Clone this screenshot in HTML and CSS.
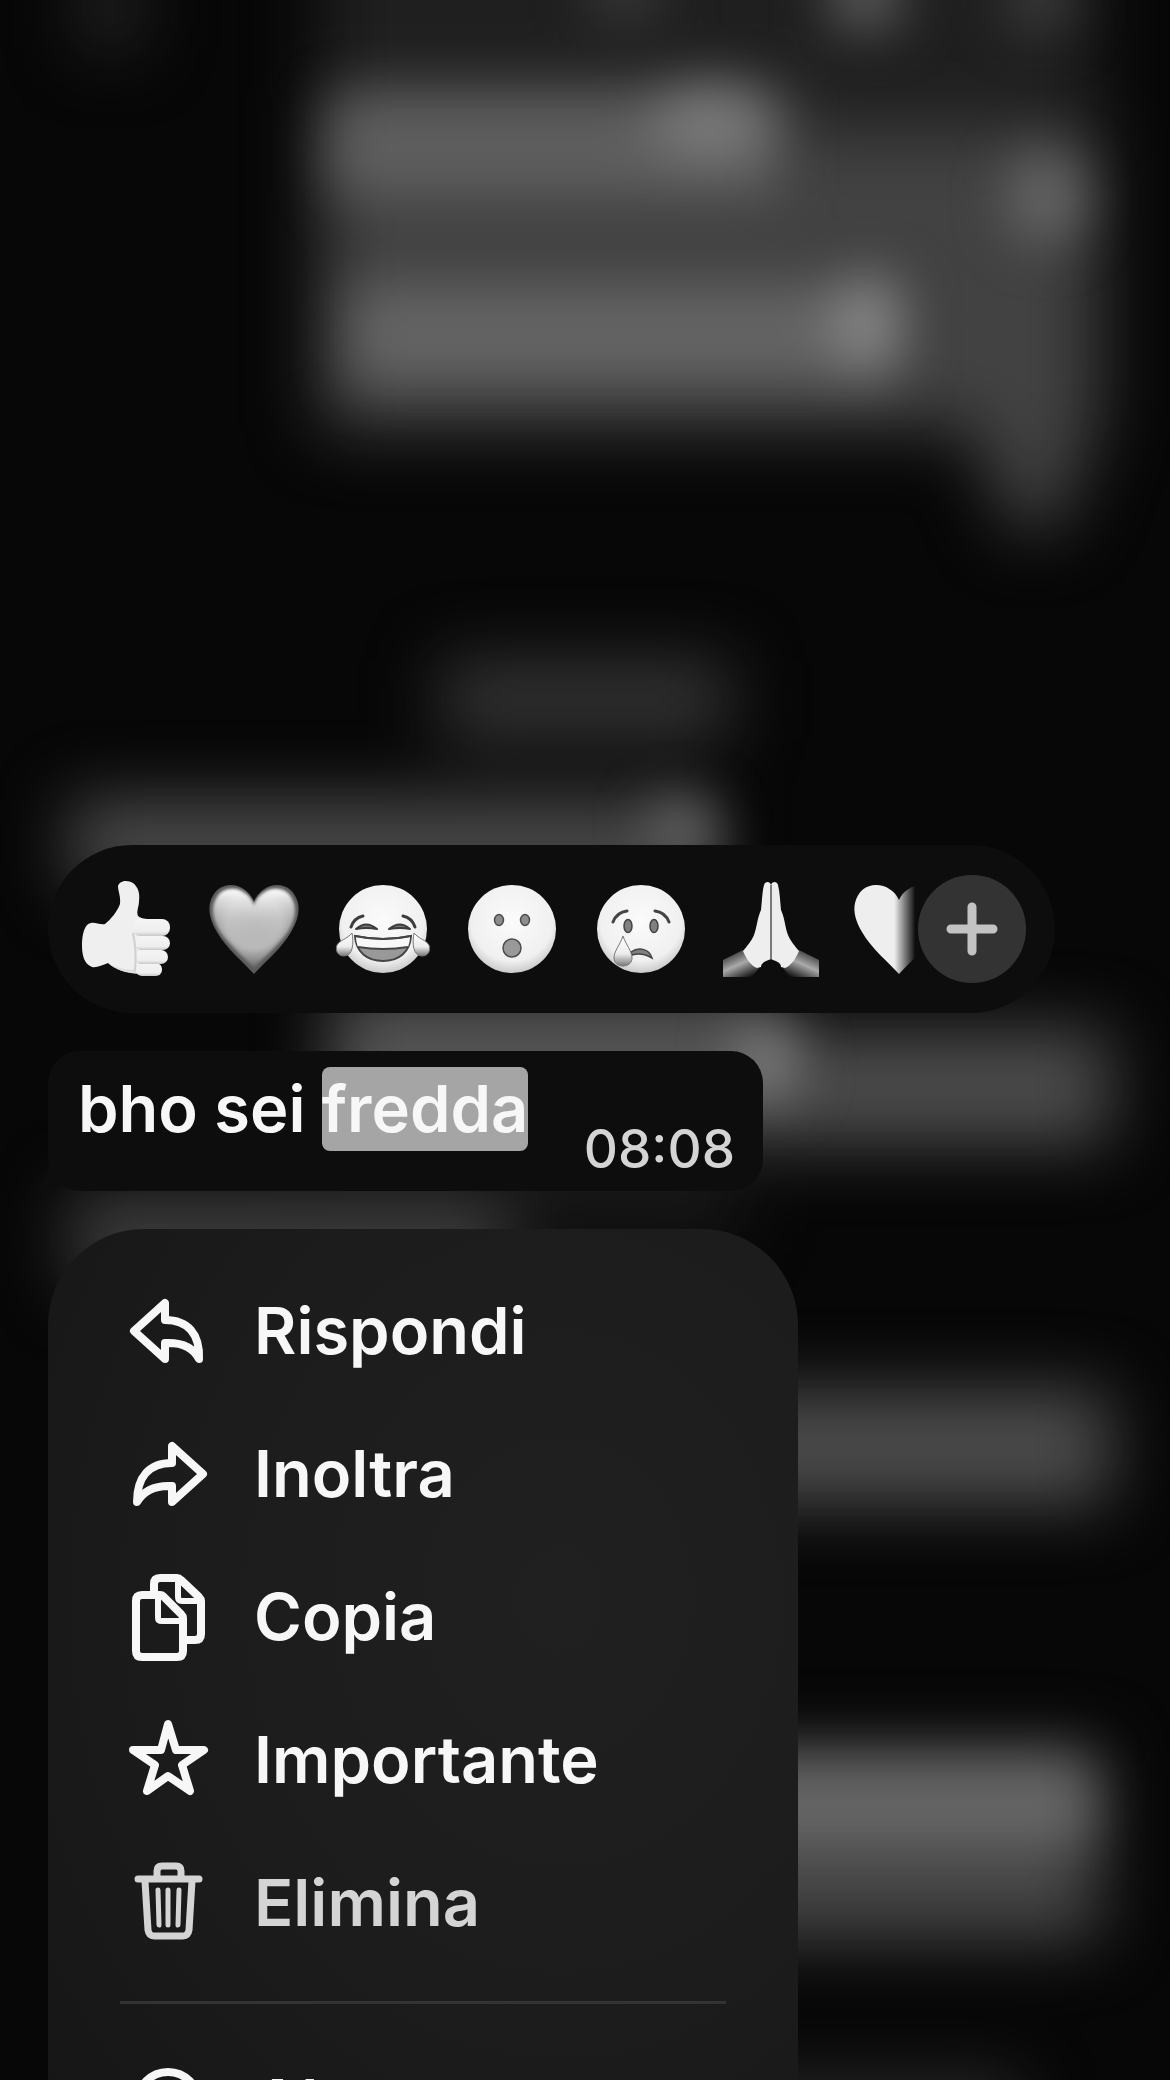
FILE: index.html
```html
<!DOCTYPE html>
<html lang="it">
<head>
  <meta charset="UTF-8"/>
  <meta name="viewport" content="width=device-width, initial-scale=1.0"/>
  <title>Chat</title>
  <link rel="stylesheet" href="styles.css">
</head>
<body>

  <!-- Blurred chat behind the menu -->
  <svg class="backdrop" viewBox="0 0 1170 2080" preserveAspectRatio="xMidYMin slice" aria-hidden="true">
    <defs>
      <filter id="blur" x="-50%" y="-100%" width="200%" height="300%" color-interpolation-filters="sRGB"><feGaussianBlur stdDeviation="34"/></filter>
      <filter id="soft" x="-100%" y="-150%" width="300%" height="400%" color-interpolation-filters="sRGB"><feGaussianBlur stdDeviation="26"/></filter>
    </defs>
    <g filter="url(#blur)">
      <rect x="320" y="-80" width="780" height="500" fill="#1f1f1f"/>
      <path d="M320 90H790V130H1100V420L1060 530H1010L970 430H320Z" fill="#424242"/>
      <rect x="80" y="-40" width="60" height="90" fill="#242424"/>
      <rect x="440" y="660" width="290" height="80" fill="#343434"/>
      <rect x="70" y="800" width="640" height="90" fill="#4c4c4c"/>
      <rect x="330" y="990" width="450" height="140" fill="#545454"/>
      <rect x="740" y="1030" width="370" height="115" fill="#4c4c4c"/>
      <rect x="70" y="1190" width="440" height="100" fill="#3c3c3c"/>
      <rect x="500" y="1170" width="240" height="60" fill="#1c1c1c"/>
      <rect x="600" y="1390" width="510" height="115" fill="#4c4c4c"/>
      <rect x="600" y="1750" width="500" height="190" fill="#474747"/>
      <rect x="600" y="2080" width="420" height="60" fill="#2e2e2e"/>
    </g>
    <g filter="url(#soft)">
      <rect x="330" y="96" width="450" height="100" fill="#686868" opacity=".75"/>
      <ellipse cx="710" cy="122" rx="62" ry="38" fill="#7a7a7a"/>
      <ellipse cx="1045" cy="198" rx="38" ry="46" fill="#666"/>
      <rect x="350" y="285" width="550" height="98" fill="#6a6a6a" opacity=".85"/>
      <ellipse cx="868" cy="322" rx="36" ry="48" fill="#868686"/>
      <rect x="830" y="-40" width="70" height="70" fill="#5a5a5a"/>
      <rect x="590" y="-40" width="70" height="60" fill="#383838"/>
      <rect x="1010" y="-40" width="60" height="70" fill="#3c3c3c"/>
      <ellipse cx="682" cy="832" rx="34" ry="34" fill="#646464"/>
      <ellipse cx="765" cy="1062" rx="34" ry="40" fill="#7c7c7c"/>
      <rect x="600" y="1762" width="490" height="84" fill="#6c6c6c" opacity=".85"/>
    </g>
  </svg>

  <main class="overlay">

    <!-- Reactions -->
    <div class="reactions">
      <button class="reaction" aria-label="Mi piace">
        <svg viewBox="0 0 96 96">
          <defs>
            <radialGradient id="face" cx=".5" cy=".4" r=".62">
              <stop offset="0" stop-color="#fbfbfb"/><stop offset=".75" stop-color="#f0f0f0"/><stop offset="1" stop-color="#c4c4c4"/>
            </radialGradient>
            <linearGradient id="finger" x1="0" y1="0" x2="0" y2="1">
              <stop offset="0" stop-color="#f4f4f4"/><stop offset=".75" stop-color="#eee"/><stop offset="1" stop-color="#c8c8c8"/>
            </linearGradient>
            <linearGradient id="tear" x1="0" y1="0" x2="0" y2="1">
              <stop offset="0" stop-color="#fff"/><stop offset=".6" stop-color="#ececec"/><stop offset="1" stop-color="#777"/>
            </linearGradient>
          </defs>
          <path fill="#efefef" d="M13 42C17 41 22 44 27 43C33 38 39 31 42 23C43 16 40 10 40 5C42 -1 50 -1 55 2C60 6 62 12 61 20C61 26 58 30 60 35C62 37 66 38 70 38L60 92C48 92 38 89 30 82C24 84 19 87 14 86C6 83 4 74 4 64C4 55 6 43 13 42Z"/>
          <path fill="#ddd" d="M30 82C38 89 48 92 60 93L60 88C50 90 38 87 30 82Z"/>
          <rect x="58" y="82" width="26" height="13" rx="6" fill="url(#finger)"/>
          <rect x="57" y="69" width="33" height="14" rx="7" fill="url(#finger)"/>
          <rect x="56" y="55" width="36" height="14" rx="7" fill="url(#finger)"/>
          <rect x="54" y="38" width="38" height="17" rx="8" fill="url(#finger)"/>
          <path d="M55 52Q59 70 57 90" fill="none" stroke="#d0d0d0" stroke-width="2"/>
        </svg>
      </button>
      <button class="reaction" aria-label="Cuore">
        <svg viewBox="0 0 96 96">
          <defs>
            <radialGradient id="love" cx=".5" cy=".42" r=".6">
              <stop offset="0" stop-color="#b4b4b4"/><stop offset=".55" stop-color="#bababa"/><stop offset=".8" stop-color="#8c8c8c"/><stop offset="1" stop-color="#5a5a5a"/>
            </radialGradient>
            <linearGradient id="shine" x1="0" y1="0" x2="0" y2="1">
              <stop offset="0" stop-color="#fff"/><stop offset=".4" stop-color="#ccc" stop-opacity=".5"/><stop offset=".7" stop-color="#bbb" stop-opacity="0"/>
            </linearGradient>
            <filter id="glow"><feGaussianBlur stdDeviation="1.5"/></filter>
          </defs>
          <path fill="#5a5a5a" d="M47 93C37 82 19 67 10 51C4 41 1 31 3 22C6 10 14 4 24 4C34 4 43 11 47 21C51 11 60 4 70 4C80 4 88 10 91 22C93 31 90 41 84 51C75 67 57 82 47 93Z"/>
          <path fill="url(#love)" filter="url(#glow)" d="M47 87C37 76 22 64 13 50C7 40 5 31 7 23C10 13 16 8 25 8C34 8 43 14 47 25C51 14 60 8 69 8C78 8 84 13 87 23C89 31 87 40 81 50C72 64 57 76 47 87Z"/>
          <path fill="url(#shine)" filter="url(#glow)" d="M47 87C37 76 22 64 13 50C7 40 5 31 7 23C10 13 16 8 25 8C34 8 43 14 47 25C51 14 60 8 69 8C78 8 84 13 87 23C89 31 87 40 81 50C72 64 57 76 47 87Z"/>
        </svg>
      </button>
      <button class="reaction" aria-label="Risata">
        <svg viewBox="0 0 96 96">
          <circle cx="47" cy="48" r="44" fill="url(#face)"/>
          <g fill="none" stroke="#3c3c3c" stroke-width="3" stroke-linecap="round">
            <path d="M15 46Q18 37 27 35M79 46Q76 37 67 35"/>
          </g>
          <path fill="#777" stroke="#3c3c3c" stroke-width="2" stroke-linejoin="round" d="M20 48Q30 39 41 48Q30 46 20 48ZM74 48Q64 39 53 48Q64 46 74 48Z"/>
          <path fill="#999" stroke="#444" stroke-width="2" d="M19 55Q47 61 75 55C74 71 63 80 47 80S20 71 19 55Z"/>
          <path fill="#f8f8f8" d="M20 56Q47 62 74 56Q74 61 72 66Q47 70 22 66Q20 61 20 56Z"/>
          <path fill="none" stroke="#444" stroke-width="2" d="M19 55Q47 61 75 55M22 66Q47 70 72 66"/>
          <path fill="url(#tear)" stroke="#777" d="M16 52C18 62 17 75 8 75C2 75 -1 70 1 64C4 59 11 58 16 52Z"/>
          <path fill="url(#tear)" stroke="#777" d="M78 52C76 62 77 75 86 75C92 75 95 70 93 64C90 59 83 58 78 52Z"/>
        </svg>
      </button>
      <button class="reaction" aria-label="Stupore">
        <svg viewBox="0 0 96 96">
          <circle cx="47" cy="48" r="44" fill="url(#face)"/>
          <g fill="#8c8c8c" stroke="#4c4c4c" stroke-width="1.5">
            <ellipse cx="34" cy="39" rx="4.5" ry="5.5"/>
            <ellipse cx="60" cy="39" rx="4.5" ry="5.5"/>
            <circle cx="47" cy="67" r="9" fill="#999"/>
          </g>
        </svg>
      </button>
      <button class="reaction" aria-label="Tristezza">
        <svg viewBox="0 0 96 96">
          <circle cx="47" cy="48" r="44" fill="url(#face)"/>
          <path d="M19 41Q23 31 33 30M75 41Q71 31 61 30" fill="none" stroke="#444" stroke-width="3" stroke-linecap="round"/>
          <g fill="#808080" stroke="#444" stroke-width="1.5">
            <ellipse cx="34" cy="45" rx="4" ry="6.5"/>
            <ellipse cx="60" cy="45" rx="4" ry="6.5"/>
            <path d="M37 71C44 66 55 67 58 77Q48 71 38 74Z"/>
          </g>
          <path fill="url(#tear)" stroke="#777" d="M29 55C32 64 38 70 38 77C38 82 34 85 29 85S20 82 20 77C20 70 26 64 29 55Z"/>
        </svg>
      </button>
      <button class="reaction" aria-label="Mani giunte">
        <svg viewBox="0 0 96 96">
          <defs>
            <linearGradient id="sleeveL" x1=".2" y1="0" x2=".8" y2="1">
              <stop offset="0" stop-color="#222"/><stop offset=".5" stop-color="#aaa"/><stop offset="1" stop-color="#0d0d0d"/>
            </linearGradient>
            <linearGradient id="sleeveR" x1=".8" y1="0" x2=".2" y2="1">
              <stop offset="0" stop-color="#222"/><stop offset=".5" stop-color="#aaa"/><stop offset="1" stop-color="#0d0d0d"/>
            </linearGradient>
          </defs>
          <path fill="url(#sleeveL)" d="M0 79L20 69L36 87L29 96H0Z"/>
          <path fill="url(#sleeveR)" d="M96 79L76 69L60 87L67 96H96Z"/>
          <path fill="#eee" d="M48 4C47 0 42 0 41 4C39 12 39 20 38 29C34 38 34 46 31 54C28 61 24 65 20 70C23 77 28 85 34 87L38 86C38 81 44 80 48 78Z"/>
          <path fill="#eee" d="M48 4C49 0 54 0 55 4C57 12 57 20 58 29C62 38 62 46 65 54C68 61 72 65 76 70C73 77 68 85 62 87L58 86C58 81 52 80 48 78Z"/>
          <path d="M48 4V78" stroke="#555" stroke-width="1.5"/>
        </svg>
      </button>
      <button class="reaction faded" aria-label="Cuore bianco">
        <svg viewBox="0 0 96 96">
          <path fill="#eee" d="M47 93C37 82 19 67 10 51C4 41 1 31 3 22C6 10 14 4 24 4C34 4 43 10 47 19C51 10 60 4 70 4C80 4 88 10 91 22C93 31 90 41 84 51C75 67 57 82 47 93Z"/>
        </svg>
      </button>
      <button class="more" aria-label="Altre reazioni">
        <svg viewBox="0 0 108 108"><path d="M54 32V76M33 54H75"/></svg>
      </button>
    </div>

    <!-- Message -->
    <div class="message">
      <svg class="tail" viewBox="0 0 40 40" aria-hidden="true"><path d="M16 0C16 20 12 32 0 38C12 41 26 38 38 30Z"/></svg>
      <p>bho sei <mark>fredda</mark></p>
      <time>08:08</time>
    </div>

    <!-- Context menu -->
    <div class="menu">
      <button class="item">
        <svg viewBox="0 0 80 80"><path d="M37 12V29C60 29 72 43 71 68C65 56 54 51 37 52V68L6 40Z"/></svg>
        <span>Rispondi</span>
      </button>
      <button class="item">
        <svg viewBox="0 0 80 80"><path d="M44 12V29C21 29 9 43 9 68C16 56 27 51 44 52V68L75 40Z"/></svg>
        <span>Inoltra</span>
      </button>
      <button class="item">
        <svg viewBox="0 0 80 80">
          <path d="M32 18H14Q8 18 8 24V74Q8 80 14 80H49Q55 80 55 74V41Q55 39 53 37L35 19Q34 18 32 18Z"/>
          <path d="M30 19V41Q30 44 34 44H54" stroke-width="6"/>
          <path d="M26 16V7Q26 1 32 1H49Q51 1 53 3L71 20Q73 22 73 24V57Q73 63 67 63H59"/>
          <path d="M50 2V20Q50 24 54 24H72" stroke-width="6"/>
        </svg>
        <span>Copia</span>
      </button>
      <button class="item">
        <svg viewBox="0 0 80 80"><path d="M40 4L33 30H5L27 45L19 71L40 56L62 71L54 45L76 30H48Z"/></svg>
        <span>Importante</span>
      </button>
      <button class="item delete">
        <svg viewBox="0 0 80 80">
          <path d="M10 16H71M29 16V8Q29 3 34 3H48Q53 3 53 8V16M17 18L20 67Q21 73 26 73H55Q60 73 61 67L64 18" stroke-width="7"/>
          <path d="M30 27L31 62M40 27V62M51 27L50 62" stroke-width="5"/>
        </svg>
        <span>Elimina</span>
      </button>
      <hr>
      <button class="item">
        <svg viewBox="0 0 80 80">
          <circle cx="40" cy="40" r="31"/>
          <path d="M26 40H27M40 40H41M54 40H55"/>
        </svg>
        <span>Altro…</span>
      </button>
    </div>

  </main>
</body>
</html>
```

FILE: styles.css
```css
body {
  margin: 0;
  height: 100vh;
  overflow: hidden;
  background-color: #070707;
  color: #f7f7f7;
  font-family: Inter, "Liberation Sans", sans-serif;
}

button {
  border: none;
  padding: 0;
  background: none;
  color: inherit;
  font: inherit;
  cursor: pointer;
}

svg {
  display: block;
  overflow: visible;
}

.backdrop {
  position: absolute;
  top: 0;
  left: 0;
  width: 100%;
  height: 100%;
  overflow: hidden;
}

.overlay {
  position: relative;
  display: flex;
  flex-direction: column;
  align-items: flex-start;
  gap: 38px;
  padding: 845px 48px 0;
}

/* Reactions */
.reactions {
  position: relative;
  display: flex;
  align-items: center;
  gap: 33px;
  padding: 36px 107px 36px 30px;
  border-radius: 84px;
  background-color: #0d0d0d;
}

.reaction svg {
  width: 96px;
  height: 96px;
}

.faded {
  -webkit-mask-image: linear-gradient(to right, #000 44%, transparent 66%);
  mask-image: linear-gradient(to right, #000 44%, transparent 66%);
}

.more {
  position: absolute;
  top: 30px;
  right: 29px;
  width: 108px;
  height: 108px;
  border-radius: 50%;
  background-color: #333;
}

.more path {
  stroke: #c3c3c3;
  stroke-width: 9;
  stroke-linecap: round;
}

/* Message */
.message {
  position: relative;
  display: flex;
  justify-content: space-between;
  align-items: flex-end;
  box-sizing: border-box;
  min-width: 715px;
  padding: 0 28px 0 30px;
  border-radius: 32px;
  background-color: #0d0d0d;
}

.message p {
  margin: 16px 0 40px;
  font-size: 65px;
  font-weight: 600;
  line-height: 84px;
}

.message mark {
  display: inline-block;
  border-radius: 8px;
  background-color: #a5a5a5;
  color: inherit;
}

.message time {
  margin-bottom: 15px;
  font-size: 53px;
  font-weight: 500;
  line-height: 54px;
  color: #d4d4d4;
}

.tail {
  position: absolute;
  left: -14px;
  bottom: 0;
  width: 40px;
  height: 40px;
  fill: #0d0d0d;
}

/* Context menu */
.menu {
  box-sizing: border-box;
  width: 750px;
  padding: 30px 72px;
  border-radius: 96px;
  background: radial-gradient(ellipse at 68% 38%, #202020, #1c1c1c 50%, #151515);
}

.item {
  display: flex;
  align-items: center;
  gap: 46px;
  width: 100%;
  height: 143px;
  padding: 0 8px;
  font-size: 65px;
  font-weight: 600;
  text-align: left;
}

.item svg {
  width: 80px;
  height: 80px;
  fill: none;
  stroke: currentColor;
  stroke-width: 8;
  stroke-linecap: round;
  stroke-linejoin: round;
}

.delete {
  color: #d4d4d4;
}

.menu hr {
  height: 3px;
  margin: 27px 0;
  border: none;
  background-color: #333;
}
```
